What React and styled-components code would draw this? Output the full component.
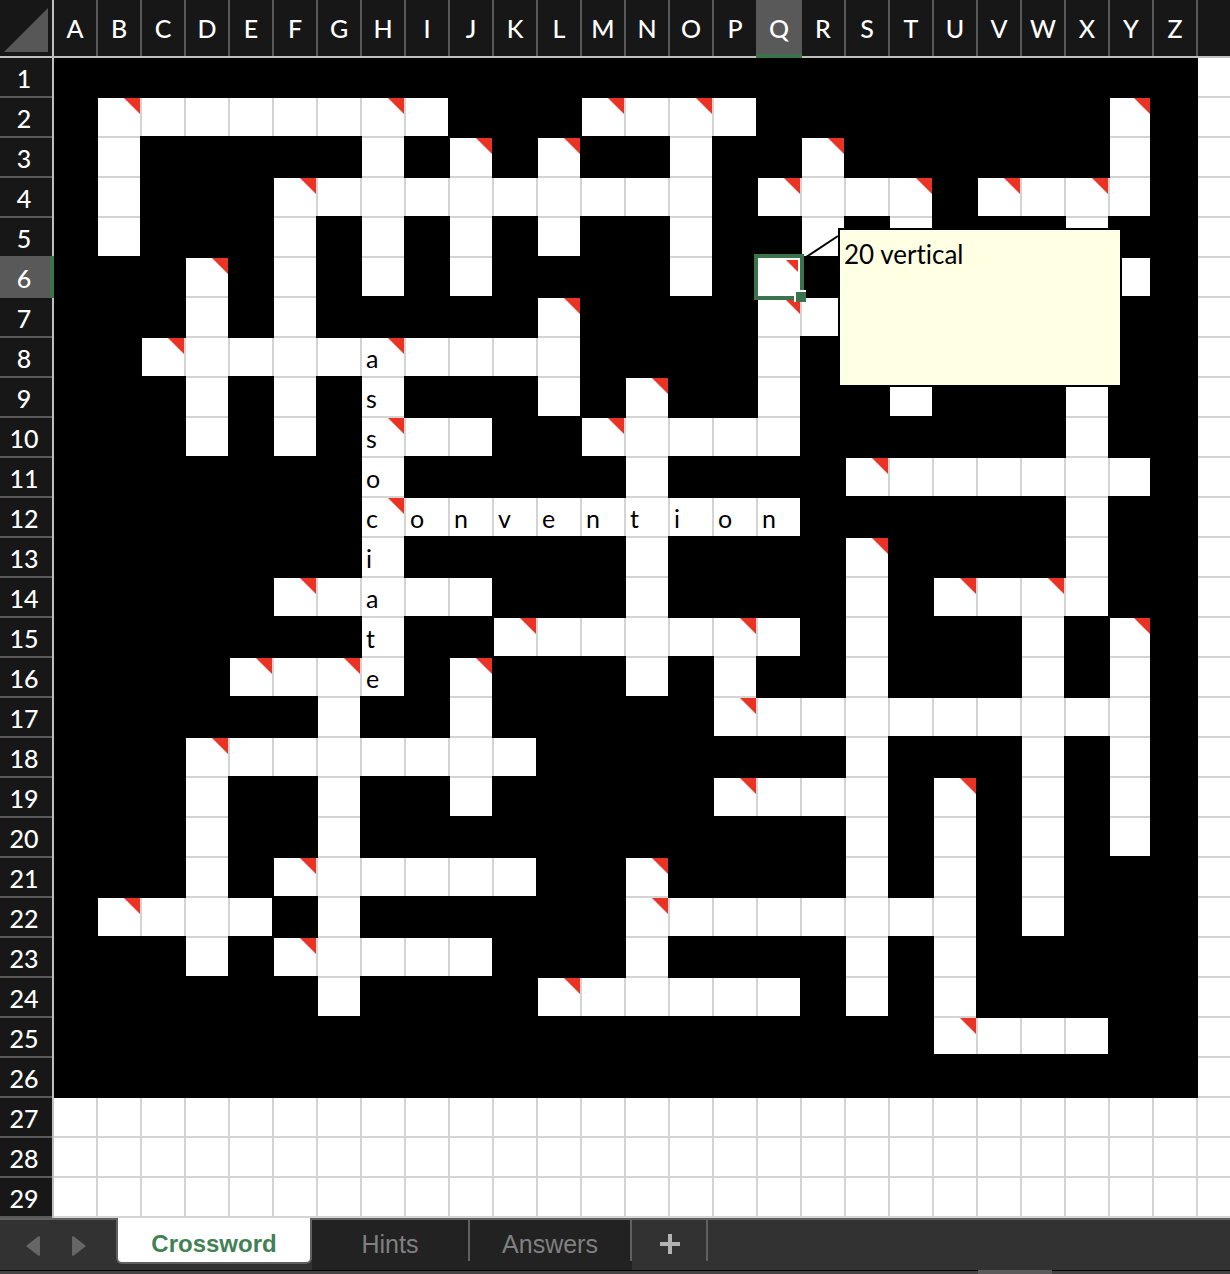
import React, { useState } from "react";
import styled, { createGlobalStyle, css } from "styled-components";

const GlobalStyle = createGlobalStyle`
  *, *::before, *::after { box-sizing: border-box; }
  body { margin: 0; background: #323232; }
`;

const colors = {
  head: "#171717",
  headLine: "#595959",
  frame: "#bfbfbf",
  line: "#d4d4d4",
  green: "#3b734c",
  flag: "#ea3323",
  bar: "#323232",
  barLine: "#616161",
};

const COLUMNS = "ABCDEFGHIJKLMNOPQRSTUVWXYZ".split("");
const ROWS = Array.from({ length: 29 }, (_, i) => i + 1);
const LAST_PUZZLE_ROW = 26;
const SELECTED = { column: "Q", row: 6 };

/* Open squares of each row, as single columns or ranges */
const OPEN = {
  2: "B-I M-P Y",
  3: "B H J L O R Y",
  4: "B F-O Q-T V-Y",
  5: "B F H J L O R T X",
  6: "D F H J O Q T-Y",
  7: "D F L Q-T X",
  8: "C-L Q T X",
  9: "D F H L N Q T X",
  10: "D F H-J M-Q X",
  11: "H N S-Y",
  12: "H-Q X",
  13: "H N S X",
  14: "F-J N S U-X",
  15: "H K-Q S W Y",
  16: "E-H J N P S W Y",
  17: "G J P-Y",
  18: "D-K S W Y",
  19: "D G J P-S U W Y",
  20: "D G S U W Y",
  21: "D F-K N S U W",
  22: "B-E G N-U W",
  23: "D F-J N S U",
  24: "G L-Q S U",
  25: "U-X",
};

/* Squares that carry a note */
const NOTED = {
  2: "BHMOY",
  3: "JLR",
  4: "FQTVX",
  6: "DQ",
  7: "LQ",
  8: "CH",
  9: "N",
  10: "HM",
  11: "S",
  12: "H",
  13: "S",
  14: "FUW",
  15: "KPY",
  16: "EGJ",
  17: "P",
  18: "D",
  19: "PU",
  21: "FN",
  22: "BN",
  23: "F",
  24: "L",
  25: "U",
};

const LETTERS = {};
"associate".split("").forEach((letter, i) => {
  LETTERS[`H${8 + i}`] = letter;
});
"convention".split("").forEach((letter, i) => {
  LETTERS[`${COLUMNS[7 + i]}12`] = letter;
});

function isOpen(columnIndex, row) {
  if (row > LAST_PUZZLE_ROW || columnIndex > 25) return true;
  return (OPEN[row] || "").split(" ").some((part) => {
    if (!part) return false;
    const [from, to = from] = part.split("-");
    return columnIndex >= COLUMNS.indexOf(from) && columnIndex <= COLUMNS.indexOf(to);
  });
}

/* Grid lines are painted as background layers so that corners stay square;
   the first layer wins where two lines cross. */
const rightLine = (color, width = 2) =>
  `linear-gradient(${color}, ${color}) right top / ${width}px 100% no-repeat border-box`;
const bottomLine = (color, width = 2) =>
  `linear-gradient(${color}, ${color}) left bottom / 100% ${width}px no-repeat border-box`;
const blackCorner =
  "linear-gradient(#000, #000) right bottom / 2px 2px no-repeat border-box";

function cellBackground({ $open, $right, $bottom, $lineRight, $lineBottom, $cornerOpen }) {
  if (!$open) return "#000";
  const layers = [
    [$lineRight, rightLine($lineRight ? colors.line : "#000", $right)],
    [$lineBottom, bottomLine($lineBottom ? colors.line : "#000", $bottom)],
  ];
  layers.sort((a, b) => Number(a[0]) - Number(b[0]));
  const corner = $cornerOpen ? [] : [blackCorner];
  return `${[...corner, ...layers.map((l) => l[1])].join(", ")}, #fff`;
}

const Page = styled.main`
  display: flex;
  flex-direction: column;
  font-family: Lato, "Liberation Sans", sans-serif;
  font-variant-ligatures: none;
`;

const Sheet = styled.table`
  width: 100%;
  table-layout: fixed;
  border-collapse: separate;
  border-spacing: 0;
  font-size: 25px;
`;

const HeadCol = styled.col`
  width: 54px;
`;

const Col = styled.col`
  width: 44px;
`;

const heading = css`
  position: relative;
  padding: 0;
  color: #fff;
  font-weight: 500;
  text-align: center;
  border: 0 solid transparent;
`;

const Corner = styled.th`
  ${heading}
  height: 58px;
  border-width: 0 2px 2px 0;
  background: ${rightLine(colors.frame)}, ${bottomLine(colors.frame)}, ${colors.head};

  svg {
    display: block;
    width: 52px;
    height: 56px;
  }
`;

const ColumnHead = styled.th`
  ${heading}
  height: 58px;
  border-width: 0 2px 2px 0;
  background: ${bottomLine(colors.frame)}, ${rightLine(colors.headLine)}, ${colors.head};

  &:last-child {
    background: ${bottomLine(colors.frame)}, ${colors.head};
  }
  ${(p) =>
    p.$selected &&
    css`
      background: ${colors.headLine};

      &::after {
        content: "";
        position: absolute;
        left: -2px;
        right: -2px;
        bottom: -2px;
        height: 4px;
        background: ${colors.green};
      }
    `}
`;

const RowHead = styled.th`
  ${heading}
  height: 40px;
  padding-top: 2px;
  padding-right: 4px;
  line-height: 36px;
  border-width: 0 2px 2px 0;
  background: ${rightLine(colors.frame)}, ${bottomLine(colors.headLine)}, ${colors.head};
  ${(p) =>
    p.$selected &&
    css`
      background: ${colors.headLine};

      &::after {
        content: "";
        position: absolute;
        top: -2px;
        right: -2px;
        bottom: -2px;
        width: 4px;
        background: ${colors.green};
      }
    `}
`;

const Cell = styled.td`
  position: relative;
  height: 40px;
  padding: 2px 0 0 4px;
  line-height: 34px;
  color: #000;
  border: 0 solid transparent;
  border-width: 0 ${(p) => p.$right}px ${(p) => p.$bottom}px 0;
  background: ${cellBackground};
  ${(p) => p.$selected && "z-index: 1;"}
`;

const Flag = styled.span`
  position: absolute;
  top: 0;
  right: 0;
  width: 16px;
  height: 16px;
  background: ${colors.flag};
  clip-path: polygon(0 0, 100% 0, 100% 100%);
`;

const Selection = styled.span`
  position: absolute;
  inset: -4px;
  border: 4px solid ${colors.green};
  box-shadow: inset 0 0 0 2px #fff;
`;

const FillHandle = styled.span`
  position: absolute;
  right: -6px;
  bottom: -6px;
  width: 12px;
  height: 12px;
  background: linear-gradient(${colors.green}, ${colors.green}) right bottom / 10px 10px no-repeat #fff;
`;

const Connector = styled.svg`
  position: absolute;
  left: 46px;
  top: -24px;
  width: 36px;
  height: 24px;
`;

const Note = styled.span`
  position: absolute;
  left: 80px;
  top: -30px;
  width: 284px;
  height: 159px;
  padding: 8px 4px;
  font-size: 26px;
  line-height: 32px;
  background: #feffe3;
  border: 2px solid #000;
`;

const TabBar = styled.nav`
  display: flex;
  height: 53px;
  background: ${colors.bar};
  border-top: 2px solid ${colors.barLine};
  border-bottom: 1px solid #000;
`;

const ArrowButton = styled.button`
  display: flex;
  align-items: center;
  justify-content: center;
  width: 46px;
  height: 52px;
  padding: 0;
  background: none;
  border: 0;

  svg {
    width: 14px;
    height: 20px;
  }
`;

const Arrows = styled.div`
  display: flex;
  width: 116px;
  padding-left: 10px;
`;

const Tab = styled.button`
  width: ${(p) => p.$width}px;
  height: 50px;
  padding: 7px 2px 9px 0;
  font: 400 25px/34px "Liberation Sans", Arial, sans-serif;
  color: #808080;
  background: linear-gradient(${colors.barLine}, ${colors.barLine}) right top / 2px 41px no-repeat #222;
  border: 0;
  ${(p) =>
    p.$active &&
    css`
      height: 46px;
      margin-top: -2px;
      padding: 7px 0 0;
      font-weight: 700;
      font-size: 24px;
      color: #418153;
      background: #fff;
      border: 2px solid ${colors.barLine};
      border-top: 0;
      border-radius: 0 0 6px 6px;
    `}
`;

const AddTab = styled.button`
  display: flex;
  align-items: center;
  justify-content: center;
  width: 76px;
  height: 41px;
  padding: 6px 0 0 2px;
  background: none;
  border: 0;
  border-right: 2px solid ${colors.barLine};

  svg {
    width: 20px;
    height: 20px;
  }
`;

const ScrollStrip = styled.div`
  display: flex;
  justify-content: flex-end;
  height: 3px;
  padding-right: 178px;
  background: #454344;
`;

const ScrollThumb = styled.div`
  width: 74px;
  height: 4px;
  margin-top: -1px;
  background: #5c5a5b;
`;

function SheetCell({ columnIndex, row }) {
  const column = COLUMNS[columnIndex];
  const open = isOpen(columnIndex, row);
  const selected = column === SELECTED.column && row === SELECTED.row;
  const thickRight = column === "Y" && row <= LAST_PUZZLE_ROW;
  const thickBottom = row === 25 && columnIndex < 26;
  return (
    <Cell
      $open={open}
      $selected={selected}
      $right={columnIndex === 26 ? 0 : thickRight ? 4 : 2}
      $bottom={thickBottom ? 4 : 2}
      $lineRight={open && isOpen(columnIndex + 1, row)}
      $lineBottom={open && isOpen(columnIndex, row + 1)}
      $cornerOpen={isOpen(columnIndex + 1, row + 1)}
    >
      {LETTERS[`${column}${row}`]}
      {column && (NOTED[row] || "").includes(column) && <Flag />}
      {selected && (
        <>
          <Connector viewBox="0 0 36 24" aria-hidden="true">
            <path d="M0 24.500 34 2" stroke="#000" strokeWidth="2" fill="none" />
          </Connector>
          <Selection>
            <FillHandle />
          </Selection>
          <Note role="note">20 vertical</Note>
        </>
      )}
    </Cell>
  );
}

const SHEETS = [
  { name: "Crossword", width: 196 },
  { name: "Hints", width: 158 },
  { name: "Answers", width: 162 },
];

export default function App() {
  const [active, setActive] = useState("Crossword");
  return (
    <Page>
      <GlobalStyle />
      <Sheet>
        <colgroup>
          <HeadCol />
          {COLUMNS.map((c) => (
            <Col key={c} />
          ))}
          <col />
        </colgroup>
        <thead>
          <tr>
            <Corner>
              <svg viewBox="0 0 52 56" aria-hidden="true">
                <path d="M4 52 48 8V52Z" fill="#575757" />
              </svg>
            </Corner>
            {COLUMNS.map((c) => (
              <ColumnHead key={c} scope="col" $selected={c === SELECTED.column}>
                {c}
              </ColumnHead>
            ))}
            <ColumnHead />
          </tr>
        </thead>
        <tbody>
          {ROWS.map((row) => (
            <tr key={row}>
              <RowHead scope="row" $selected={row === SELECTED.row}>
                {row}
              </RowHead>
              {Array.from({ length: 27 }, (_, i) => (
                <SheetCell key={i} columnIndex={i} row={row} />
              ))}
            </tr>
          ))}
        </tbody>
      </Sheet>
      <TabBar aria-label="Sheets">
        <Arrows>
          <ArrowButton type="button" aria-label="Previous sheet">
            <svg viewBox="0 0 14 20" aria-hidden="true">
              <path d="M0 10 12 0.500Q14 0 14 1V19Q14 20 12 19.500Z" fill="#666" />
            </svg>
          </ArrowButton>
          <ArrowButton type="button" aria-label="Next sheet">
            <svg viewBox="0 0 14 20" aria-hidden="true">
              <path d="M14 10 2 0.500Q0 0 0 1V19Q0 20 2 19.500Z" fill="#666" />
            </svg>
          </ArrowButton>
        </Arrows>
        {SHEETS.map((s) => (
          <Tab
            key={s.name}
            type="button"
            $width={s.width}
            $active={s.name === active}
            onClick={() => setActive(s.name)}
          >
            {s.name}
          </Tab>
        ))}
        <AddTab type="button" aria-label="Add sheet">
          <svg viewBox="0 0 20 20" aria-hidden="true">
            <path d="M10 0V20M0 10H20" stroke="#b3b3b3" strokeWidth="4" />
          </svg>
        </AddTab>
      </TabBar>
      <ScrollStrip>
        <ScrollThumb />
      </ScrollStrip>
    </Page>
  );
}
